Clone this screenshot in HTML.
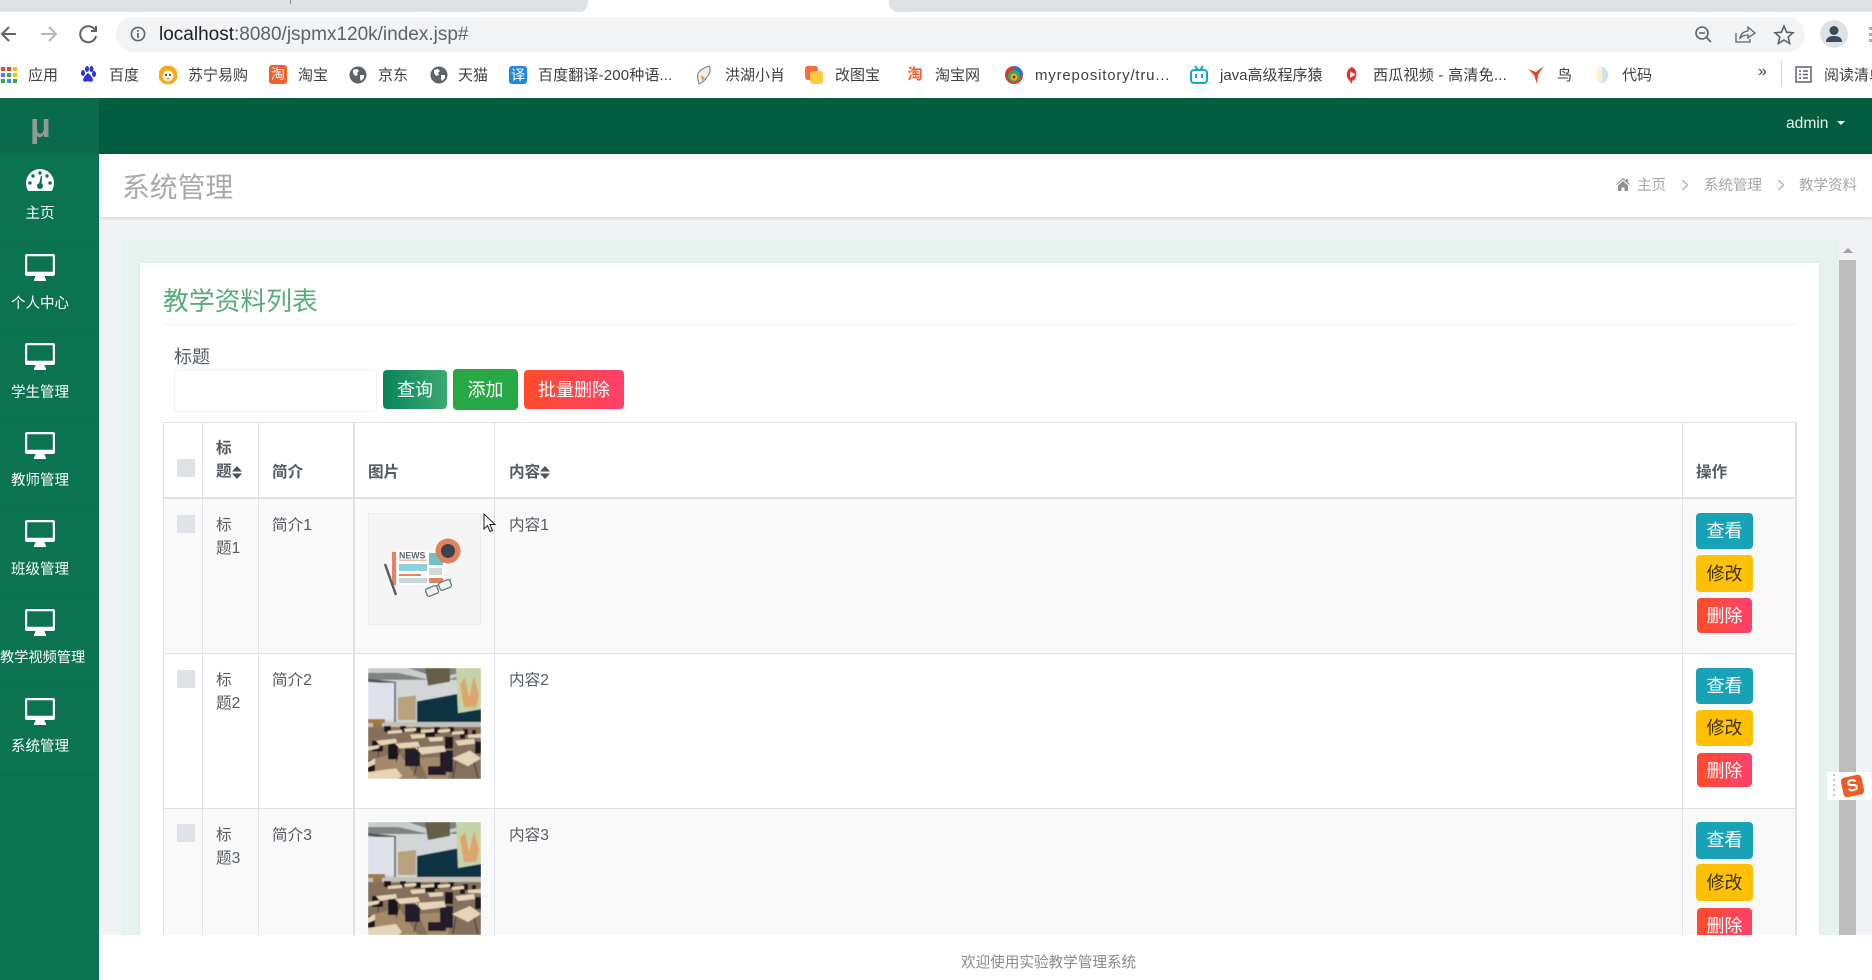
<!DOCTYPE html>
<html lang="zh-CN">
<head>
<meta charset="utf-8">
<title>教学资料</title>
<style>
html,body{margin:0;padding:0;width:1872px;height:980px;overflow:hidden;background:#fff}
body{position:relative;font-family:"Liberation Sans","Noto Sans CJK SC",sans-serif;color:#495057}
.a{position:absolute;box-sizing:border-box}
.t{position:absolute;white-space:nowrap;line-height:1}
.bm{position:absolute;top:67px;font-size:15px;line-height:17px;color:#3c4043;white-space:nowrap}
.bi{position:absolute;top:65px;width:18px;height:20px}
.nav{position:absolute;left:0;width:80px;text-align:center;color:#fff;font-size:14.5px;line-height:18px;white-space:nowrap}
.line{position:absolute;background:#dee2e6}
.cell{position:absolute;font-size:15.6px;line-height:23.4px;color:#555b61}
.th{font-weight:700;color:#535a62}
.cb{position:absolute;left:177px;width:18px;height:18px;background:#dfe2e6}
.btn{position:absolute;border-radius:4px;text-align:center;font-size:18px;color:#fff;white-space:nowrap}
.info{background:#17a2b8;left:1696px;width:57px}
.warn{background:#ffc107;left:1696px;width:57px;color:#3a3000}
.del{background:linear-gradient(90deg,#ff4b2b,#ff416c);left:1697px;width:55px}
</style>
</head>
<body>
<svg width="0" height="0" style="position:absolute">
<defs>
<symbol id="mon" viewBox="0 0 30 27">
<path fill="#fff" fill-rule="evenodd" d="M2 0H28Q30 0 30 2V20Q30 22 28 22H19.5Q19.7 24 21 25.5V27H9V25.5Q10.3 24 10.5 22H2Q0 22 0 20V2Q0 0 2 0ZM2.2 2.2V17.8H27.8V2.2Z"/>
</symbol>
<symbol id="globe" viewBox="0 0 18 18">
<circle cx="9" cy="9" r="8.5" fill="#5f6368"/>
<path fill="#fff" d="M4 4l4-1 2 2-2 2 1 2-3 1-2-3zM11 9l4 0 0 3-3 3-1-2z"/>
</symbol>
<filter id="b" x="0" y="0" width="1" height="1"><feGaussianBlur stdDeviation=".6"/></filter>
<g id="room">
<rect width="113" height="113" fill="#d2d6d6"/>
<rect width="113" height="12" fill="#7f8482"/>
<path d="M0 0H40L70 10L113 0V3L70 14L30 5H0Z" fill="#c9cdcb"/>
<path d="M0 11L28 14V17L0 14Z" fill="#4f5755"/>
<rect x="0" y="15" width="26" height="38" fill="#dfe2ea"/>
<rect x="26" y="15" width="2" height="40" fill="#6f7679"/>
<path d="M30 30L48 28V53H30Z" fill="#b9a07f"/>
<path d="M49 34L113 22V56H49Z" fill="#0f3243"/>
<path d="M57 0H82V14L60 18Z" fill="#665e48"/>
<path d="M88 0H113V42L90 46Z" fill="#c6d3a9"/>
<path d="M92 16L97 10L101 30L106 8L111 28L108 40H96Z" fill="#dca66a"/>
<rect y="55" width="113" height="6" fill="#c4c1b9"/>
<rect x="0" y="52" width="17" height="4" fill="#a5794a"/>
<rect x="5" y="56" width="9" height="12" fill="#9b7447"/>
<rect y="60" width="113" height="53" fill="#85705c"/>
<g fill="#a58a6a"><path d="M0 95L30 85L50 113H0Z"/><path d="M50 92L85 90L80 113H60Z"/></g>
<g fill="#1d151d">
<rect x="16" y="59" width="7" height="6"/><rect x="32" y="59" width="6" height="6"/><rect x="46" y="60" width="7" height="6"/><rect x="66" y="60" width="6" height="7"/><rect x="80" y="60" width="6" height="6"/><rect x="95" y="62" width="5" height="6"/><rect x="104" y="63" width="4" height="6"/>
<rect x="4" y="74" width="11" height="11"/><rect x="20" y="77" width="10" height="16"/><rect x="0" y="94" width="7" height="12"/>
<rect x="107" y="75" width="6" height="12"/><rect x="77" y="70" width="8" height="12"/><rect x="57" y="62" width="10" height="8"/><rect x="92" y="65" width="5" height="7"/>
</g>
<g fill="#241a2a"><rect x="37" y="82" width="15" height="18"/><rect x="72" y="84" width="13" height="22"/><rect x="60" y="100" width="18" height="9"/></g>
<g fill="#e6d4b8">
<path d="M84 92L102 84L113 92L100 100Z"/><path d="M47 81L76 79L78 85L54 88Z"/><path d="M27 77L50 75L52 80L32 82Z"/>
<path d="M0 106L28 102L34 110L30 113H0Z"/><path d="M8 74L28 72L29 76L12 79Z"/><path d="M87 74L106 72L107 77L90 79Z"/>
<path d="M60 71L75 70L75 74L62 75Z"/><path d="M42 68L57 67L57 71L44 72Z"/><path d="M0 80L14 78L10 82L0 84Z"/><path d="M0 96L7 92L7 98L0 101Z"/>
<path d="M20 64L34 63L34 66L20 67Z"/><path d="M36 62L48 61L48 64L37 65Z"/><path d="M53 63L66 62L66 65L53 66Z"/><path d="M70 63L82 62L82 65L70 66Z"/><path d="M84 65L96 64L96 67L84 68Z"/><path d="M100 68L113 67V71L100 71Z"/>
</g>
<g stroke="#2b2322" stroke-width=".8" fill="none">
<path d="M88 95L85 112M106 96L110 112M52 87L46 110M74 86L78 100M32 82L28 96M50 80L50 92M12 78L10 90"/>
</g>
</g>
</defs>
</svg>

<!-- tab strip -->
<div class="a" style="left:0;top:0;width:1872px;height:12px;background:#fff"></div>
<div class="a" style="left:0;top:0;width:588px;height:12px;background:#dee1e6;border-bottom-right-radius:9px"></div>
<div class="a" style="left:889px;top:0;width:983px;height:12px;background:#dee1e6;border-bottom-left-radius:9px"></div>
<div class="a" style="left:290px;top:0;width:1px;height:4px;background:#8a8d91"></div>

<!-- toolbar -->
<svg class="a" style="left:0;top:22px" width="100" height="24" viewBox="0 0 100 24" fill="none" stroke-width="2">
<path d="M16 12H2M9 5L2 12L9 19" stroke="#5f6368"/>
<path d="M41 12H56M49 5L56 12L49 19" stroke="#b4b7bb"/>
<path d="M95 8A8 8 0 1 0 96 14M96 4V9H91" stroke="#5f6368"/>
</svg>
<div class="a" style="left:116px;top:17px;width:1689px;height:35px;background:#f1f3f4;border-radius:18px"></div>
<svg class="a" style="left:130px;top:26px" width="16" height="16" viewBox="0 0 16 16" fill="none"><circle cx="8" cy="8" r="6.6" stroke="#5f6368" stroke-width="1.6"/><path d="M8 7V12M8 4V5.8" stroke="#5f6368" stroke-width="1.7"/></svg>
<div class="t" style="left:159px;top:25px;font-size:19px;line-height:20px;color:#202124">localhost<span style="color:#5f6368">:8080/jspmx120k/index.jsp#</span></div>
<svg class="a" style="left:1692px;top:24px" width="110" height="22" viewBox="0 0 110 22" fill="none" stroke="#5f6368" stroke-width="1.6">
<circle cx="10" cy="9" r="6"/><path d="M14.500 13.500L19 18M7 9H13"/>
<path d="M44 9V18H58V15M48 14Q49 8 56 7V3L63 9L56 14V11Q51 11 48 14Z" stroke-width="1.300"/>
<path d="M92 2L94.600 8.200L101 8.800L96.200 13L97.700 19.500L92 16L86.300 19.500L87.800 13L83 8.800L89.400 8.200Z"/>
</svg>
<div class="a" style="left:1820px;top:20px;width:28px;height:28px;border-radius:50%;background:#dee1e6"></div>
<svg class="a" style="left:1820px;top:20px" width="28" height="28" viewBox="0 0 28 28"><circle cx="14" cy="10.500" r="4.500" fill="#3c4a5c"/><path d="M6 22Q6 16 14 16Q22 16 22 22Z" fill="#3c4a5c"/></svg>
<div class="a" style="left:1869px;top:27px;width:3px;height:3px;background:#a9acb0;box-shadow:0 6px 0 #a9acb0,0 12px 0 #a9acb0"></div>

<!-- bookmarks -->
<svg class="a" style="left:0;top:66px" width="18" height="18" viewBox="0 0 18 18">
<g><rect x="1" y="1" width="4" height="4" fill="#ea4335"/><rect x="7" y="1" width="4" height="4" fill="#ea4335"/><rect x="13" y="1" width="4" height="4" fill="#fbbc04"/><rect x="1" y="7" width="4" height="4" fill="#4285f4"/><rect x="7" y="7" width="4" height="4" fill="#34a853"/><rect x="13" y="7" width="4" height="4" fill="#fbbc04"/><rect x="1" y="13" width="4" height="4" fill="#34a853"/><rect x="7" y="13" width="4" height="4" fill="#4285f4"/><rect x="13" y="13" width="4" height="4" fill="#34a853"/></g></svg>
<div class="bm" style="left:28px">应用</div>
<svg class="bi" style="left:79px" viewBox="0 0 18 20"><g fill="#2932e1"><ellipse cx="4" cy="8" rx="2" ry="3"/><ellipse cx="8" cy="4" rx="2" ry="3"/><ellipse cx="12.500" cy="4" rx="2" ry="3"/><ellipse cx="15" cy="9" rx="2" ry="3"/><path d="M9 8Q13 11 14 15Q13 18 9 16Q5 18 4 15Q5 11 9 8Z"/></g></svg>
<div class="bm" style="left:109px">百度</div>
<svg class="bi" style="left:159px" viewBox="0 0 18 20"><circle cx="9" cy="10" r="9.500" fill="#f7a81b"/><circle cx="9" cy="11" r="5.500" fill="#fff3d8"/><circle cx="7" cy="10" r="1" fill="#333"/><circle cx="11" cy="10" r="1" fill="#333"/><path d="M8 13H10L9 14.500Z" fill="#c33"/></svg>
<div class="bm" style="left:188px">苏宁易购</div>
<div class="a" style="left:269px;top:65px;width:18px;height:19px;background:#f0622d;border-radius:3px;color:#fff;font-size:14px;line-height:18px;text-align:center">淘</div>
<div class="bm" style="left:298px">淘宝</div>
<svg class="bi" style="left:349px;top:66px;height:18px" viewBox="0 0 18 18"><use href="#globe"/></svg>
<div class="bm" style="left:378px">京东</div>
<svg class="bi" style="left:430px;top:66px;height:18px" viewBox="0 0 18 18"><use href="#globe"/></svg>
<div class="bm" style="left:458px">天猫</div>
<div class="a" style="left:509px;top:66px;width:18px;height:18px;background:#1e88e5;border-radius:3px;color:#fff;font-size:14px;line-height:18px;text-align:center">译</div>
<div class="bm" style="left:538px;letter-spacing:.15px">百度翻译-200种语...</div>
<svg class="bi" style="left:695px" viewBox="0 0 18 20"><path d="M14 1Q17 6 12 12Q9 17 4 19Q2 12 3 8Q7 3 14 1Z" fill="#eee" stroke="#777"/><path d="M6 10L10 13L7 16Z" fill="#e0a030"/></svg>
<div class="bm" style="left:725px">洪湖小肖</div>
<svg class="bi" style="left:805px" viewBox="0 0 18 20"><rect x="0" y="1" width="13" height="14" rx="3" fill="#ff6b3d"/><rect x="5" y="6" width="13" height="13" rx="3" fill="#ffc940"/></svg>
<div class="bm" style="left:835px">改图宝</div>
<div class="a" style="left:906px;top:66px;width:18px;height:18px;color:#f0622d;font-size:15px;line-height:18px;text-align:center;font-weight:700">淘</div>
<div class="bm" style="left:935px">淘宝网</div>
<svg class="bi" style="left:1005px;top:66px;height:18px" viewBox="0 0 18 18"><circle cx="9" cy="9" r="9" fill="#d93a2b"/><path d="M9 0A9 9 0 0 1 18 9L9 9Z" fill="#2f6fd8"/><circle cx="9" cy="10" r="6" fill="#3aa655"/><circle cx="9" cy="11" r="3.500" fill="#e6b422"/><circle cx="9" cy="11" r="1.500" fill="#7a3a12"/></svg>
<div class="bm" style="left:1035px;letter-spacing:.8px">myrepository/tru...</div>
<svg class="bi" style="left:1190px" viewBox="0 0 18 20" fill="none"><rect x="1" y="5" width="16" height="13" rx="3" stroke="#12a5d6" stroke-width="2"/><path d="M5 1L8 5M13 1L10 5" stroke="#12a5d6" stroke-width="2"/><rect x="5" y="9" width="2" height="4" fill="#12a5d6"/><rect x="11" y="9" width="2" height="4" fill="#12a5d6"/></svg>
<div class="bm" style="left:1220px">java高级程序猿</div>
<svg class="bi" style="left:1343px" viewBox="0 0 20 20"><path d="M10 1A9 9 0 0 1 10 17L10 20L7 16A9 9 0 0 1 10 1Z" fill="#ee2d2d"/><path d="M8 6L14 9.500L8 13Z" fill="#fff"/></svg>
<div class="bm" style="left:1373px;letter-spacing:.25px">西瓜视频 - 高清免...</div>
<svg class="bi" style="left:1527px" viewBox="0 0 18 20"><path d="M17 1L9 7L1 4L7 10L10 19L11 10Z" fill="#e8432e"/></svg>
<div class="bm" style="left:1557px">鸟</div>
<svg class="bi" style="left:1593px;top:66px;height:18px" viewBox="0 0 18 18"><ellipse cx="9" cy="9" rx="6" ry="8" fill="#fdf3c0"/><path d="M9 1A6 8 0 0 1 9 17Z" fill="#cfe0f5"/></svg>
<div class="bm" style="left:1622px">代码</div>
<div class="bm" style="left:1758px;top:63px;font-size:16px">»</div>
<div class="a" style="left:1781px;top:60px;width:1px;height:26px;background:#d0d3d7"></div>
<svg class="a" style="left:1795px;top:66px" width="17" height="17" viewBox="0 0 17 17" fill="none" stroke="#5f6368" stroke-width="1.500"><rect x="1" y="1" width="15" height="15"/><path d="M4 5H6M8 5H13M4 8.500H6M8 8.500H13M4 12H6M8 12H13"/></svg>
<div class="bm" style="left:1824px">阅读清单</div>

<!-- main background -->
<div class="a" style="left:99px;top:154px;width:1773px;height:826px;background:#f0f2f6"></div>

<!-- top navbar -->
<div class="a" style="left:0;top:98px;width:1872px;height:56px;background:#015c40"></div>
<div class="a" style="left:0;top:98px;width:99px;height:56px;background:#096a4c"></div>
<div class="t" style="left:30px;top:111px;font-size:34px;font-weight:700;color:#929a96;line-height:30px">μ</div>
<div class="t" style="left:1786px;top:115px;font-size:15.600px;line-height:18px;color:#e8f3ee">admin</div>
<div class="a" style="left:1837px;top:121px;width:0;height:0;border-left:4.500px solid transparent;border-right:4.500px solid transparent;border-top:4.500px solid #fff"></div>

<!-- sidebar -->
<div class="a" style="left:0;top:154px;width:99px;height:826px;background:#0b7350"></div>
<div class="a" style="left:0;top:242px;width:96px;height:1px;background:#0a6d4c"></div>
<div class="a" style="left:0;top:331px;width:96px;height:1px;background:#0a6d4c"></div>
<div class="a" style="left:0;top:420px;width:96px;height:1px;background:#0a6d4c"></div>
<div class="a" style="left:0;top:509px;width:96px;height:1px;background:#0a6d4c"></div>
<div class="a" style="left:0;top:597px;width:96px;height:1px;background:#0a6d4c"></div>
<div class="a" style="left:0;top:686px;width:96px;height:1px;background:#0a6d4c"></div>
<div class="a" style="left:0;top:775px;width:96px;height:1px;background:#0a6d4c"></div>

<svg class="a" style="left:26px;top:169px" width="28" height="22" viewBox="0 0 28 22"><path fill="#fff" d="M14 0A14 14 0 0 1 28 14Q28 18 26 21.500Q25.500 22 25 22H3Q2.500 22 2 21.500Q0 18 0 14A14 14 0 0 1 14 0Z"/><g fill="#0b7350"><circle cx="14" cy="4" r="1.700"/><circle cx="7" cy="7" r="1.700"/><circle cx="21" cy="7" r="1.700"/><circle cx="4" cy="14" r="1.700"/><circle cx="24" cy="14" r="1.700"/><circle cx="14" cy="17" r="3"/><path d="M12.700 16.500L15 6.500L16 7L15.500 17.500Z"/></g></svg>
<div class="nav" style="top:205px">主页</div>
<svg class="a" style="left:25px;top:254px" width="30" height="27"><use href="#mon"/></svg>
<div class="nav" style="top:295px">个人中心</div>
<svg class="a" style="left:25px;top:343px" width="30" height="27"><use href="#mon"/></svg>
<div class="nav" style="top:384px">学生管理</div>
<svg class="a" style="left:25px;top:432px" width="30" height="27"><use href="#mon"/></svg>
<div class="nav" style="top:472px">教师管理</div>
<svg class="a" style="left:25px;top:520px" width="30" height="27"><use href="#mon"/></svg>
<div class="nav" style="top:561px">班级管理</div>
<svg class="a" style="left:25px;top:609px" width="30" height="27"><use href="#mon"/></svg>
<div class="nav" style="top:649px;text-align:left;font-size:14.2px">教学视频管理</div>
<svg class="a" style="left:25px;top:698px" width="30" height="27"><use href="#mon"/></svg>
<div class="nav" style="top:738px">系统管理</div>

<!-- page header -->
<div class="a" style="left:99px;top:154px;width:1773px;height:63px;background:#fff;box-shadow:0 1px 3px rgba(0,0,0,.14)"></div>
<div class="t" style="left:122px;top:173px;font-size:27.800px;line-height:30px;color:#a9a9a9">系统管理</div>
<svg class="a" style="left:1616px;top:178px" width="14" height="13" viewBox="0 0 14 13"><path fill="#8f8f8f" d="M7 0L10 2.700V1H12V4.500L14 6.300 13.300 7 7 1.600 .7 7 0 6.300ZM2 7.500L7 3 12 7.500V13H8.500V9.500H5.500V13H2Z"/></svg>
<div class="t" style="left:1637px;top:178px;font-size:14.500px;line-height:16px;color:#a5a5a5">主页</div>
<svg class="a" style="left:1681px;top:179px" width="8" height="12" fill="none" stroke="#a5a5a5" stroke-width="1.200"><path d="M1.500 1L6.500 6L1.500 11"/></svg>
<div class="t" style="left:1704px;top:178px;font-size:14.500px;line-height:16px;color:#a5a5a5">系统管理</div>
<svg class="a" style="left:1777px;top:179px" width="8" height="12" fill="none" stroke="#a5a5a5" stroke-width="1.200"><path d="M1.500 1L6.500 6L1.500 11"/></svg>
<div class="t" style="left:1799px;top:178px;font-size:14.500px;line-height:16px;color:#a5a5a5">教学资料</div>

<!-- green panel -->
<div class="a" style="left:122px;top:240px;width:1717px;height:695px;background:#e6f2ed"></div>
<!-- scrollbar -->
<div class="a" style="left:1839px;top:240px;width:17px;height:695px;background:#f0f2f6"></div>
<div class="a" style="left:1842.500px;top:248px;width:0;height:0;border-left:5px solid transparent;border-right:5px solid transparent;border-bottom:5px solid #a3a3a3"></div>
<div class="a" style="left:1839px;top:260px;width:17px;height:675px;background:#bdbdbd"></div>

<!-- card -->
<div class="a" style="left:140px;top:263px;width:1679px;height:672px;background:#fff;box-shadow:0 0 2px rgba(0,0,0,.08)"></div>
<div class="t" style="left:163px;top:287px;font-size:25.800px;line-height:30px;color:#57ab78">教学资料列表</div>
<div class="a" style="left:163px;top:324px;width:1633px;height:1px;background:#ecefef"></div>
<div class="t" style="left:174px;top:347px;font-size:18px;line-height:20px;color:#555b61">标题</div>
<div class="a" style="left:174px;top:369px;width:203px;height:43px;background:#fff;border:1px solid #f0f1f2;border-radius:3px"></div>
<div class="btn" style="left:383px;top:370px;width:64px;height:39px;line-height:40px;background:linear-gradient(90deg,#07845a,#3ea872)">查询</div>
<div class="btn" style="left:453px;top:369px;width:65px;height:41px;line-height:42px;background:#28a745">添加</div>
<div class="btn" style="left:524px;top:370px;width:100px;height:39px;line-height:40px;background:linear-gradient(90deg,#ff4b2b,#ff416c)">批量删除</div>

<!-- table -->
<div class="a" style="left:163px;top:499px;width:1633px;height:155px;background:#f9f9f9"></div>
<div class="a" style="left:163px;top:809px;width:1633px;height:126px;background:#f9f9f9"></div>
<div class="line" style="left:163px;top:422px;width:1633px;height:1px"></div>
<div class="line" style="left:163px;top:497px;width:1633px;height:2px"></div>
<div class="line" style="left:163px;top:653px;width:1633px;height:1px"></div>
<div class="line" style="left:163px;top:808px;width:1633px;height:1px"></div>
<div class="line" style="left:163px;top:422px;width:1px;height:513px"></div>
<div class="line" style="left:202px;top:422px;width:1px;height:513px"></div>
<div class="line" style="left:258px;top:422px;width:1px;height:513px"></div>
<div class="line" style="left:353px;top:422px;width:2px;height:513px"></div>
<div class="line" style="left:494px;top:422px;width:1px;height:513px"></div>
<div class="line" style="left:1682px;top:422px;width:1px;height:513px"></div>
<div class="line" style="left:1795px;top:422px;width:2px;height:513px"></div>

<!-- header row -->
<div class="cb" style="top:459px"></div>
<div class="cell th" style="left:216px;top:437px;width:30px">标<br>题</div>
<svg class="a" style="left:232px;top:466px" width="10" height="13" viewBox="0 0 10 13"><path fill="#4a5058" d="M5 0L10 5.500H0ZM0 7.500H10L5 13Z"/></svg>
<div class="cell th" style="left:272px;top:461px">简介</div>
<div class="cell th" style="left:368px;top:461px">图片</div>
<div class="cell th" style="left:509px;top:461px">内容</div>
<svg class="a" style="left:540px;top:466px" width="10" height="13" viewBox="0 0 10 13"><path fill="#4a5058" d="M5 0L10 5.500H0ZM0 7.500H10L5 13Z"/></svg>
<div class="cell th" style="left:1696px;top:461px">操作</div>

<!-- row 1 -->
<div class="cb" style="top:515px"></div>
<div class="cell" style="left:216px;top:514px">标<br>题1</div>
<div class="cell" style="left:272px;top:514px">简介1</div>
<div class="cell" style="left:509px;top:514px">内容1</div>
<svg class="a" style="left:368px;top:513px" width="113" height="112" viewBox="0 0 113 112">
<rect x=".5" y=".5" width="112" height="111" fill="#f5f5f5" stroke="#ececec"/>
<rect x="29" y="37" width="48" height="35" fill="#fff"/>
<rect x="24" y="39" width="4" height="33" fill="#e8825a"/>
<text x="31" y="45.500" font-family="Liberation Sans,sans-serif" font-size="8.800" font-weight="700" fill="#5f6876">NEWS</text>
<rect x="31" y="46.500" width="28" height="1.500" fill="#e8c0a8"/>
<rect x="31" y="51" width="28" height="7" fill="#8fd0dc"/>
<rect x="61" y="40" width="14" height="12" fill="#6fc2cc"/>
<rect x="61" y="55" width="13" height="7" fill="#ccd8dc"/>
<rect x="31" y="61" width="22" height="2" fill="#e8825a"/>
<rect x="31" y="65" width="28" height="5" fill="#c9d6d8"/>
<rect x="61" y="65" width="14" height="5" fill="#e8825a"/>
<circle cx="80" cy="38" r="12.500" fill="#e2815a"/><circle cx="80" cy="38" r="7" fill="#3c4450"/>
<path d="M17 51L28 82" stroke="#565d6c" stroke-width="2.500"/>
<path d="M57 78L83 66" stroke="#7a8a90" stroke-width="1.200"/>
<rect x="58" y="74" width="12" height="8" rx="2" fill="#eef3f3" stroke="#5f7a80" stroke-width="1.300" transform="rotate(-22 64 78)"/>
<rect x="71" y="68" width="12" height="8" rx="2" fill="#eef3f3" stroke="#5f7a80" stroke-width="1.300" transform="rotate(-22 77 72)"/>
</svg>
<div class="btn info" style="top:513px;height:36px;line-height:36px">查看</div>
<div class="btn warn" style="top:555px;height:37px;line-height:38px">修改</div>
<div class="btn del" style="top:598px;height:35px;line-height:36px">删除</div>

<!-- row 2 -->
<div class="cb" style="top:670px"></div>
<div class="cell" style="left:216px;top:669px">标<br>题2</div>
<div class="cell" style="left:272px;top:669px">简介2</div>
<div class="cell" style="left:509px;top:669px">内容2</div>
<svg class="a" style="left:368px;top:668px" width="113" height="111" viewBox="0 0 113 113" preserveAspectRatio="none">
<use href="#room" filter="url(#b)"/>
</svg>
<div class="btn info" style="top:668px;height:36px;line-height:37px">查看</div>
<div class="btn warn" style="top:710px;height:36px;line-height:37px">修改</div>
<div class="btn del" style="top:753px;height:34px;line-height:36px">删除</div>

<!-- row 3 -->
<div class="cb" style="top:824px"></div>
<div class="cell" style="left:216px;top:824px">标<br>题3</div>
<div class="cell" style="left:272px;top:824px">简介3</div>
<div class="cell" style="left:509px;top:824px">内容3</div>
<svg class="a" style="left:368px;top:822px" width="113" height="113" viewBox="0 0 113 113">
<use href="#room" filter="url(#b)"/>
</svg>
<div class="btn info" style="top:822px;height:37px;line-height:37px">查看</div>
<div class="btn warn" style="top:864px;height:37px;line-height:38px">修改</div>
<div class="btn del" style="top:908px;height:36px;line-height:36px">删除</div>

<!-- footer -->
<div class="a" style="left:99px;top:935px;width:1773px;height:45px;background:#fff"></div>
<div class="t" style="left:961px;top:955px;font-size:14.600px;line-height:16px;color:#8a8a8a">欢迎使用实验教学管理系统</div>

<!-- cursor -->
<svg class="a" style="left:483px;top:513px" width="13" height="20" viewBox="0 0 13 20"><path d="M1 1V16L4.500 12.500L7 18.500L9.500 17.500L7 11.500H12Z" fill="#fff" stroke="#222" stroke-width="1"/></svg>

<!-- sogou -->
<div class="a" style="left:1827px;top:772px;width:45px;height:28px;background:#fff"></div>
<div class="a" style="left:1833px;top:774px;width:2px;height:24px;background:repeating-linear-gradient(180deg,#c4c4c4 0 2px,transparent 2px 5px)"></div>
<div class="a" style="left:1842px;top:776px;width:21px;height:20px;background:#ee5a24;border-radius:4px;transform:rotate(-12deg);color:#fff;font-size:17px;font-weight:700;line-height:20px;text-align:center">S</div>
</body>
</html>
